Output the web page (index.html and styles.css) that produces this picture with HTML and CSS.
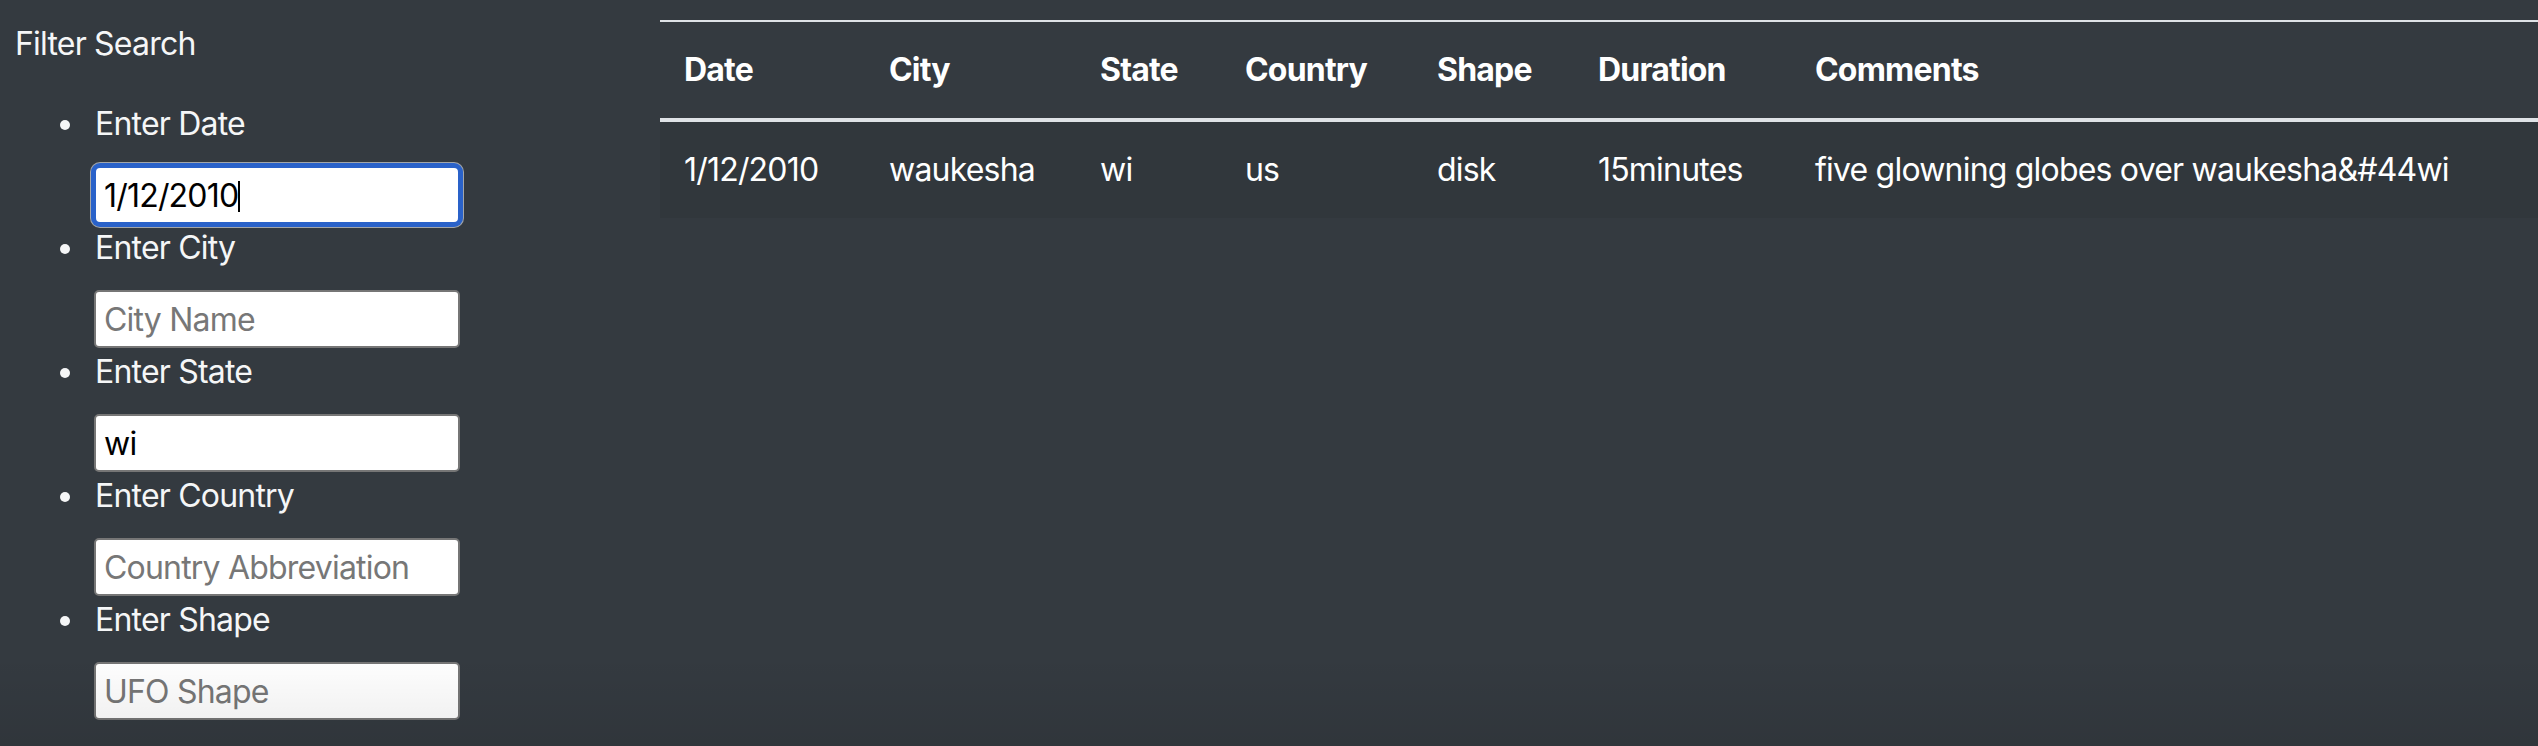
FILE: index.html
```html
<!DOCTYPE html>
<html lang="en">
<head>
<meta charset="utf-8">
<title>UFO Sightings</title>
<link rel="stylesheet" href="styles.css">
</head>
<body>
<div class="page">
  <aside class="sidebar">
    <div class="filter-title">Filter Search</div>
    <ul class="filters">
      <li class="filter">
        <label class="filter-label" for="datetime">Enter Date</label>
        <span class="field-wrap">
          <input class="field field-focus" id="datetime" type="text" value="1/12/2010">
          <span class="caret"></span>
        </span>
      </li>
      <li class="filter">
        <label class="filter-label" for="city">Enter City</label>
        <span class="field-wrap"><input class="field" id="city" type="text" placeholder="City Name"></span>
      </li>
      <li class="filter">
        <label class="filter-label" for="state">Enter State</label>
        <span class="field-wrap"><input class="field" id="state" type="text" value="wi"></span>
      </li>
      <li class="filter">
        <label class="filter-label" for="country">Enter Country</label>
        <span class="field-wrap"><input class="field" id="country" type="text" placeholder="Country Abbreviation"></span>
      </li>
      <li class="filter">
        <label class="filter-label" for="shape">Enter Shape</label>
        <span class="field-wrap"><input class="field" id="shape" type="text" placeholder="UFO Shape"></span>
      </li>
    </ul>
  </aside>
  <main class="results">
    <table class="ufo-table">
      <thead>
        <tr>
          <th class="col-date">Date</th>
          <th class="col-city">City</th>
          <th class="col-state">State</th>
          <th class="col-country">Country</th>
          <th class="col-shape">Shape</th>
          <th class="col-duration">Duration</th>
          <th class="col-comments">Comments</th>
        </tr>
      </thead>
      <tbody>
        <tr>
          <td>1/12/2010</td>
          <td>waukesha</td>
          <td>wi</td>
          <td>us</td>
          <td>disk</td>
          <td>15minutes</td>
          <td>five glowning globes over waukesha&amp;#44wi</td>
        </tr>
      </tbody>
    </table>
  </main>
</div>
</body>
</html>
```
FILE: styles.css
```css
html, body {
  margin: 0;
  padding: 0;
}

body {
  background: #343a40;
  color: #fff;
  font-family: Inter, "Noto Sans", "Liberation Sans", sans-serif;
  font-size: 32px;
  line-height: 48px;
  letter-spacing: -0.8px;
  height: 746px;
  overflow: hidden;
  position: relative;
}

body::after {
  content: "";
  position: absolute;
  left: 0;
  right: 0;
  bottom: 0;
  height: 92px;
  background: linear-gradient(to bottom, rgba(0,0,0,0), rgba(0,0,0,0.08));
  pointer-events: none;
}

.page {
  display: flex;
  align-items: flex-start;
  padding-top: 20px;
}

.sidebar {
  width: 645px;
  padding-left: 15px;
  flex: none;
  color: #f5f6f7;
}

.filter-title {
  height: 48px;
}

.filters {
  margin: 32px 0 0 0;
  padding-left: 80px;
  list-style: none;
}

.filter {
  position: relative;
}

.filter::before {
  content: "";
  position: absolute;
  left: -35px;
  top: 20px;
  width: 10px;
  height: 10px;
  border-radius: 50%;
  background: #f5f6f7;
}

.filter-label {
  height: 48px;
  display: block;
}

.field-wrap {
  position: relative;
  display: block;
  width: 366px;
  margin-top: 18px;
  margin-left: -1px;
}

.field {
  display: block;
  box-sizing: border-box;
  width: 366px;
  height: 58px;
  margin: 0;
  padding: 0 8px;
  border: 2px solid #767676;
  border-radius: 5px;
  background: #fff;
  color: #000;
  font-family: Inter, "Noto Sans", "Liberation Sans", sans-serif;
  font-size: 32px;
  letter-spacing: -0.8px;
  outline: none;
}

.field::placeholder {
  color: #777;
}

.field-focus {
  border: 2px solid #2a62c9;
  box-shadow: 0 0 0 3px #2a62c9, 0 0 0 4px rgba(255,255,255,0.55);
  border-radius: 6px;
}

.caret {
  position: absolute;
  left: 144px;
  top: 15px;
  width: 2px;
  height: 31px;
  background: #000;
}

.results {
  flex: 1;
  min-width: 0;
}

.ufo-table {
  border-collapse: separate;
  border-spacing: 0;
  width: 100%;
  color: #fff;
}

.ufo-table th,
.ufo-table td {
  padding: 24px;
  text-align: left;
  white-space: nowrap;
}

.ufo-table th {
  font-weight: 700;
  vertical-align: bottom;
  border-top: 2px solid #dee2e6;
  border-bottom: 4px solid #dee2e6;
}

.ufo-table td {
  vertical-align: top;
  background: rgba(0,0,0,0.05);
}

.col-date { width: 157px; }
.col-city { width: 163px; }
.col-state { width: 97px; }
.col-country { width: 144px; }
.col-shape { width: 113px; }
.col-duration { width: 169px; }
.col-comments { width: auto; }
```
